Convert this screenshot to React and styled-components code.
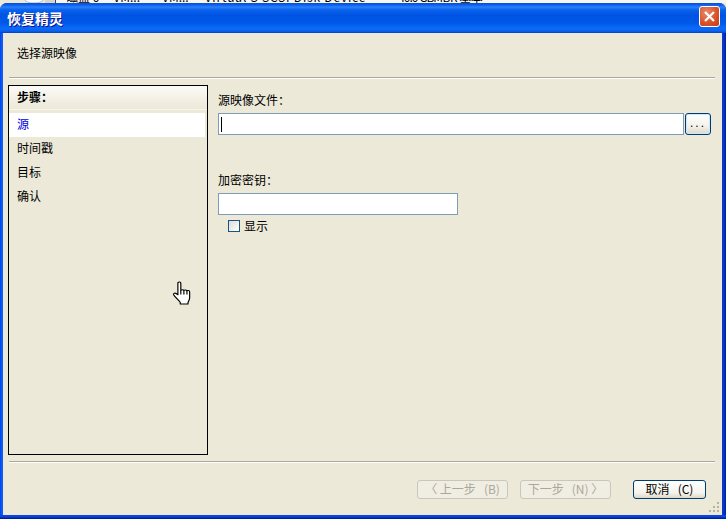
import React from "react";
import styled, { createGlobalStyle } from "styled-components";

const GlobalStyle = createGlobalStyle`
  html, body {
    margin: 0;
    padding: 0;
    width: 726px;
    height: 519px;
    overflow: hidden;
    background: #ece9d8;
  }
  body {
    font-family: "Noto Sans CJK SC", "Liberation Sans", sans-serif;
    font-size: 12px;
    color: #000;
  }
`;

const steps = ["源", "时间戳", "目标", "确认"];

const BehindStrip = styled.div`
  height: 3px;
  overflow: hidden;
  display: flex;
  background: #f7f6f0;
  line-height: 12px;
  white-space: pre;
`;

const TreeGutter = styled.div`
  width: 55px;
  flex: none;
  display: flex;
  justify-content: space-between;
  background: #ece9d8;
  border-right: 1px solid #444;
  svg {
    margin-left: 24px;
  }
`;

const GutterBlock = styled.span`
  width: 10px;
  background: #d8d5c8;
`;

const StripText = styled.span`
  display: block;
  margin-top: -9px;
  margin-left: ${(p) => p.$left}px;
  letter-spacing: ${(p) => p.$spacing || 0}px;
`;

const Window = styled.div`
  box-sizing: border-box;
  height: 516px;
  display: flex;
  flex-direction: column;
  padding: 0 4px 4px 3px;
  border-radius: 7px 7px 0 0;
  overflow: hidden;
  background: linear-gradient(
    90deg,
    #0831d9 0,
    #0a5cf8 1px,
    #0a5cf8 3px,
    #0a46dc 50%,
    #0a3ed0 722px,
    #0833c0 724px,
    #001ea0 726px
  );
  box-shadow: inset 0 -1px 0 #001ea0, inset 0 -2px 0 #0833c0, inset 0 -4px 0 #0a46dc;
`;

const TitleBar = styled.div`
  box-sizing: border-box;
  height: 30px;
  flex: none;
  margin: 0 -4px 0 -3px;
  display: flex;
  align-items: center;
  justify-content: space-between;
  padding: 0 6px 3px 7px;
  background: linear-gradient(
    180deg,
    #0a4fd0 0,
    #0a5ff0 2px,
    #2a80fb 4px,
    #0a62ec 7px,
    #0054e3 12px,
    #0058e8 20px,
    #0a6af8 25px,
    #0a62ee 28px,
    #003dc8 30px
  );
`;

const Title = styled.span`
  color: #fff;
  font-size: 14px;
  font-weight: 700;
  line-height: 18px;
  padding-top: 2px;
  text-shadow: 1px 1px 0 #0f1089;
`;

const CloseButton = styled.button`
  width: 21px;
  height: 21px;
  padding: 0;
  border: 1px solid #fff;
  border-radius: 3px;
  background: radial-gradient(circle at 35% 30%, #e98a6b 0, #d9532c 55%, #c13b12 100%);
  display: flex;
  align-items: center;
  justify-content: center;
`;

const Body = styled.div`
  flex: 1;
  display: flex;
  flex-direction: column;
  min-height: 0;
  background: #ece9d8;
  position: relative;
`;

const Heading = styled.div`
  box-sizing: border-box;
  height: 44px;
  flex: none;
  display: flex;
  align-items: center;
  padding: 0 0 5px 14px;
`;

const Rule = styled.div`
  flex: none;
  height: 1px;
  margin: 0 7px 0 6px;
  background: #aca899;
  border-bottom: 1px solid #fff;
`;

const Content = styled.div`
  flex: none;
  height: 370px;
  display: flex;
  gap: 10px;
  padding: 6px 11px 6px 5px;
`;

const StepPanel = styled.div`
  width: 198px;
  flex: none;
  border: 1px solid #000;
  display: flex;
  flex-direction: column;
`;

const StepHeader = styled.div`
  box-sizing: border-box;
  height: 24px;
  flex: none;
  display: flex;
  align-items: center;
  padding: 0 0 3px 8px;
  font-weight: 700;
  background: linear-gradient(180deg, #fbfaf7 0, #ece9d8 100%);
  border-bottom: 1px solid #f6f4ec;
`;

const StepList = styled.div`
  display: flex;
  flex-direction: column;
  padding-top: 3px;
`;

const StepItem = styled.div`
  box-sizing: border-box;
  height: 24px;
  display: flex;
  align-items: center;
  padding: 0 0 3px 8px;
  margin-right: 2px;
  color: ${(p) => (p.$active ? "#0000e0" : "#000")};
  background: ${(p) => (p.$active ? "#fff" : "transparent")};
`;

const Form = styled.div`
  flex: 1;
  display: flex;
  flex-direction: column;
`;

const FieldLabel = styled.label`
  display: block;
  height: 18px;
  line-height: 18px;
  margin-top: ${(p) => p.$top}px;
  margin-bottom: 4px;
`;

const FileRow = styled.div`
  display: flex;
  gap: 1px;
`;

const TextBox = styled.div`
  box-sizing: border-box;
  height: 22px;
  width: ${(p) => (p.$width ? `${p.$width}px` : "auto")};
  flex: ${(p) => (p.$width ? "none" : "1")};
  background: #fff;
  border: 1px solid #7f9db9;
  display: flex;
  align-items: center;
  padding-left: 2px;
`;

const Caret = styled.span`
  width: 1px;
  height: 15px;
  background: #000;
`;

const BrowseButton = styled.button`
  box-sizing: border-box;
  width: 26px;
  height: 22px;
  padding: 0 0 3px;
  border: 1px solid #003c74;
  border-radius: 3px;
  background: linear-gradient(180deg, #fff 0, #f3f2ea 60%, #dcd8c8 100%);
  box-shadow: inset 0 0 0 1px #cee7ff;
  font: 12px "Liberation Sans", sans-serif;
  letter-spacing: 2px;
  color: #000;
`;

const CheckRow = styled.label`
  display: flex;
  align-items: center;
  gap: 4px;
  margin: 2px 0 0 10px;
  height: 18px;
  line-height: 16px;
`;

const CheckBox = styled.span`
  box-sizing: border-box;
  width: 12px;
  height: 12px;
  border: 1px solid #1c5180;
  background: linear-gradient(135deg, #dcdcd7 0, #fff 100%);
`;

const Footer = styled.div`
  flex: 1;
  display: flex;
  align-items: flex-start;
  justify-content: flex-end;
  gap: 12px;
  padding: 17px 16px 0 0;
  position: relative;
`;

const WizardButton = styled.button`
  box-sizing: border-box;
  height: 19px;
  width: ${(p) => p.$width}px;
  margin-left: ${(p) => p.$gap || 0}px;
  padding: 0 0 2px;
  border-radius: 3px;
  font: 12px "Noto Sans CJK SC", sans-serif;
  white-space: pre;
  display: flex;
  align-items: center;
  justify-content: center;
  color: #000;
  border: 1px solid #003c74;
  background: linear-gradient(180deg, #fff 0, #f4f3ec 70%, #dcd8c8 100%);
  &:disabled {
    color: #aca899;
    border-color: #c9c7ba;
    background: #f0eee2;
  }
`;

const Grip = styled.svg`
  position: absolute;
  right: 1px;
  bottom: 1px;
`;

const HandCursor = styled.svg`
  position: absolute;
  left: 169px;
  top: 248px;
`;

const App = () => {
  return (
    <>
      <GlobalStyle />
      <BehindStrip>
        <TreeGutter>
          <svg width="20" height="3" viewBox="0 0 20 3">
            <ellipse cx="10" cy="0" rx="9" ry="3" fill="#fff" stroke="#b8b8c8" />
          </svg>
          <GutterBlock />
        </TreeGutter>
        <StripText $left={10}>磁盘 0</StripText>
        <StripText $left={14}>VM...</StripText>
        <StripText $left={22}>VM...</StripText>
        <StripText $left={16} $spacing={0.8}>Virtual S SCSI Disk Device</StripText>
        <StripText $left={32} $spacing={-1}>40.0 GB</StripText>
        <StripText $left={0} $spacing={-0.5}>MBR 基本</StripText>
      </BehindStrip>
      <Window>
        <TitleBar>
          <Title>恢复精灵</Title>
          <CloseButton aria-label="关闭">
            <svg width="13" height="13" viewBox="0 0 13 13">
              <path d="M2 2l9 9M11 2l-9 9" stroke="#fff" strokeWidth="2.2" />
            </svg>
          </CloseButton>
        </TitleBar>
        <Body>
          <Heading>选择源映像</Heading>
          <Rule />
          <Content>
            <StepPanel>
              <StepHeader>步骤：</StepHeader>
              <StepList>
                {steps.map((step, index) => (
                  <StepItem key={step} $active={index === 0}>
                    {step}
                  </StepItem>
                ))}
              </StepList>
            </StepPanel>
            <Form>
              <FieldLabel $top={6}>源映像文件：</FieldLabel>
              <FileRow>
                <TextBox>
                  <Caret />
                </TextBox>
                <BrowseButton>...</BrowseButton>
              </FileRow>
              <FieldLabel $top={36}>加密密钥：</FieldLabel>
              <TextBox $width={240} />
              <CheckRow>
                <CheckBox />
                显示
              </CheckRow>
            </Form>
          </Content>
          <Rule />
          <Footer>
            <WizardButton disabled $width={91}>{"〈 上一步   (B)"}</WizardButton>
            <WizardButton disabled $width={91}>{"下一步   (N) 〉"}</WizardButton>
            <WizardButton $width={73} $gap={10}>{"取消   (C)"}</WizardButton>
            <Grip width="12" height="12" viewBox="0 0 12 12" fill="#b5b2a3">
              <rect x="8" y="0" width="2" height="2" />
              <rect x="4" y="4" width="2" height="2" />
              <rect x="8" y="4" width="2" height="2" />
              <rect x="0" y="8" width="2" height="2" />
              <rect x="4" y="8" width="2" height="2" />
              <rect x="8" y="8" width="2" height="2" />
            </Grip>
          </Footer>
          <HandCursor width="20" height="24" viewBox="0 0 17 23" preserveAspectRatio="none">
            <path
              d="M5 1.500c1 -1 2.500 -.6 2.500 1V9c.8-.8 2-.8 2.600 0 .7-.7 2-.6 2.500.3.8-.6 2.400-.2 2.400 1.200V16c0 2-.8 3-1.400 4.500v1.500H7v-1.500C6 18.500 3 16 1.500 13.500c-.8-1.300.8-2.500 2-1.500L5 13.200V2.500z"
              fill="#fff"
              stroke="#000"
              strokeWidth="1"
              strokeLinejoin="round"
            />
            <path d="M7.500 9v4M10.100 9v4M12.700 9.500V13" stroke="#000" strokeWidth="1" fill="none" />
          </HandCursor>
        </Body>
      </Window>
    </>
  );
};

export default App;
